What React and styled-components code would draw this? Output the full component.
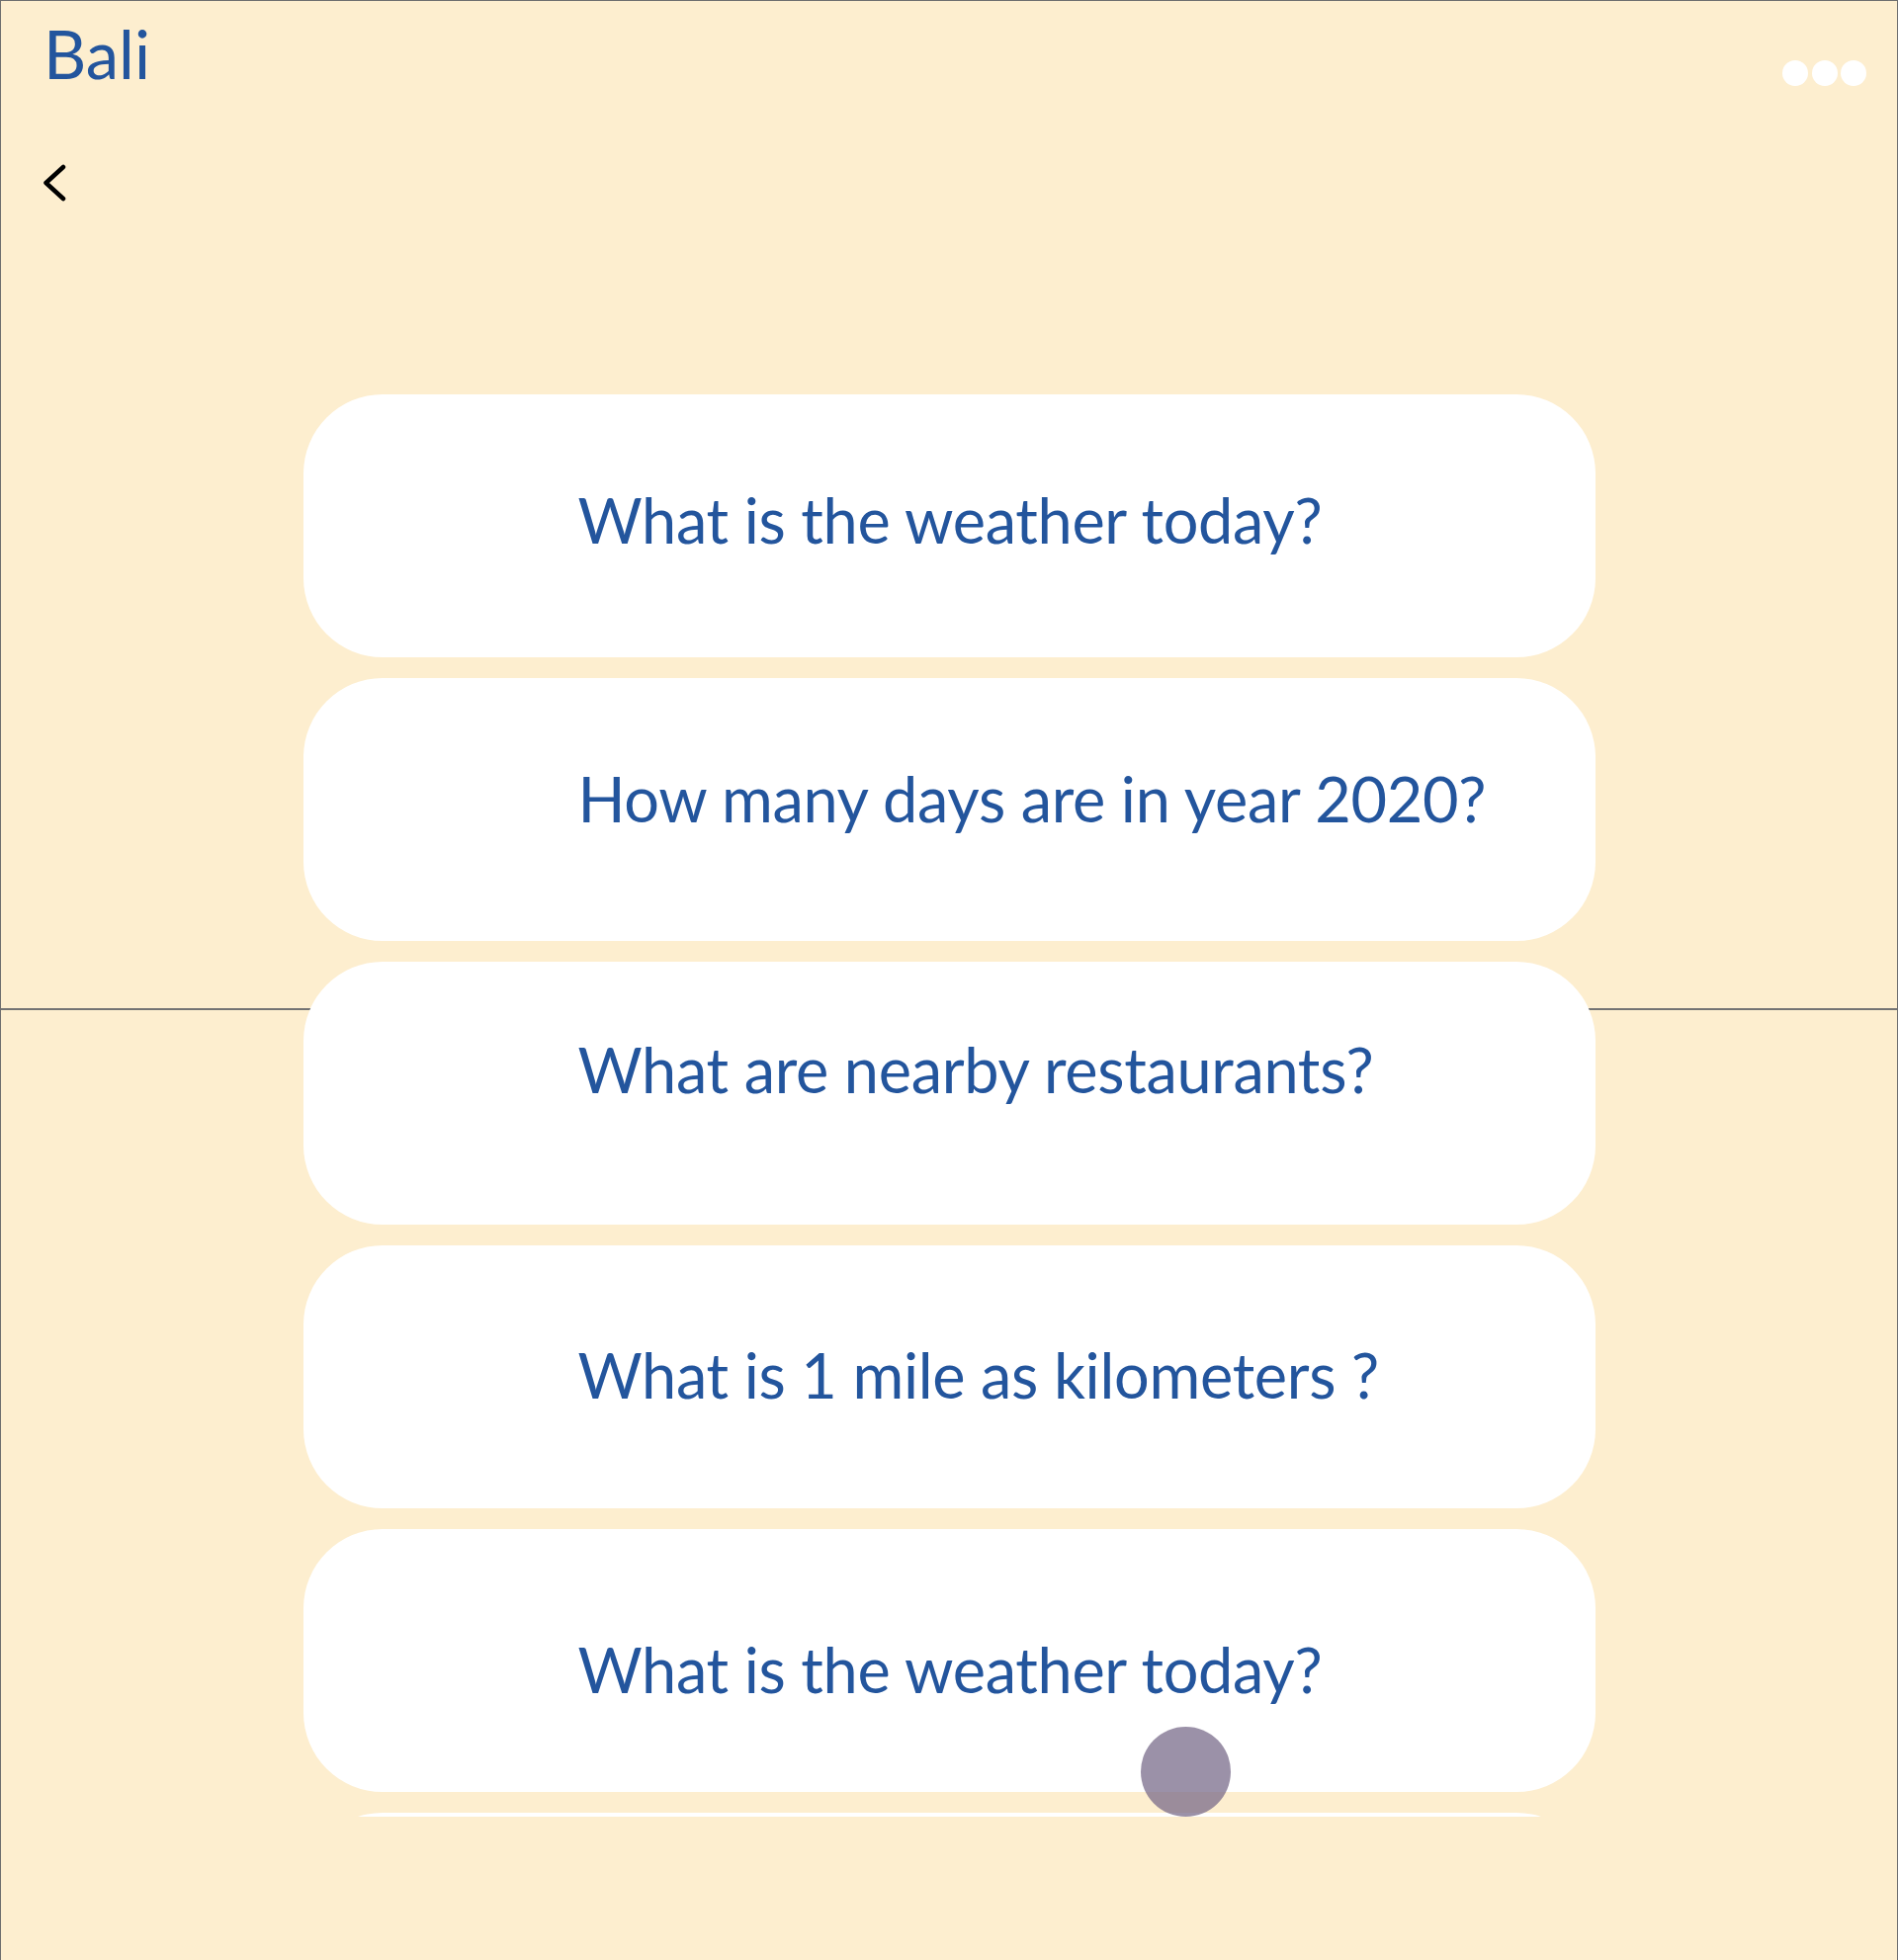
import React from 'react';
import styled, { createGlobalStyle } from 'styled-components';

const GlobalStyle = createGlobalStyle`
  html, body {
    margin: 0;
    padding: 0;
    overflow: hidden;
    background: #fdeecf;
  }
  * {
    box-sizing: border-box;
  }
`;

const Screen = styled.div`
  width: 1920px;
  height: 2000px;
  border: 1px solid #6e6e6e;
  background-color: #fdeecf;
  /* divider line drawn across the middle of the screen, cards sit over it */
  background-image: linear-gradient(
    to bottom,
    transparent 1019px,
    #737373 1019px,
    #737373 1021px,
    transparent 1021px
  );
  font-family: Lato, 'Noto Sans', sans-serif;
  display: flex;
  flex-direction: column;
`;

const TopBar = styled.div`
  display: flex;
  justify-content: space-between;
  align-items: flex-start;
  padding: 20px 31px 0 43px;
`;

const Title = styled.h1`
  margin: 0;
  font-size: 67px;
  line-height: 67px;
  font-weight: 400;
  color: #23559d;
`;

const Dots = styled.div`
  display: flex;
  gap: 3.5px;
  margin-top: 40px;
`;

const Dot = styled.span`
  width: 26px;
  height: 26px;
  border-radius: 50%;
  background: #ffffff;
`;

const BackButton = styled.button`
  display: flex;
  align-self: flex-start;
  margin: 77px 0 0 43px;
  padding: 0;
  border: 0;
  background: none;
  cursor: pointer;
`;

const List = styled.div`
  position: relative;
  margin-top: 194px;
  height: 1439px;
  overflow: hidden;
  display: flex;
  flex-direction: column;
  align-items: center;
  gap: 21px;
`;

const Card = styled.div`
  flex: none;
  width: 1307px;
  height: 266px;
  border-radius: 80px;
  background: #ffffff;
  padding: ${(p) => p.$top}px 0 0 278px;
`;

const Question = styled.p`
  margin: 0;
  font-size: 63px;
  line-height: 63px;
  font-weight: 400;
  letter-spacing: -0.3px;
  color: #23559d;
  white-space: nowrap;
`;

const Handle = styled.div`
  position: absolute;
  top: 1348px;
  left: 1153px;
  width: 91px;
  height: 91px;
  border-radius: 50%;
  background: rgba(117, 103, 135, 0.72);
`;

const questions = [
  { text: 'What is the weather today?', top: 95 },
  { text: 'How many days are in year 2020?', top: 90 },
  { text: 'What are nearby restaurants?', top: 77 },
  { text: 'What is 1 mile as kilometers ?', top: 99 },
  { text: 'What is the weather today?', top: 110 },
  // next card is only peeking in at the bottom edge
  { text: '', top: 95 },
];

const ChevronLeft = () => (
  <svg width="24" height="40" viewBox="0 0 24 40" fill="none">
    <path
      d="M20 4 L2.5 20 L20 36"
      stroke="#000"
      strokeWidth="4.5"
      strokeLinecap="round"
      strokeLinejoin="round"
    />
  </svg>
);

export default function App() {
  return (
    <>
      <GlobalStyle />
      <Screen>
        <TopBar>
          <Title>Bali</Title>
          <Dots>
            <Dot />
            <Dot />
            <Dot />
          </Dots>
        </TopBar>
        <BackButton aria-label="Back">
          <ChevronLeft />
        </BackButton>
        <List>
          {questions.map((q, i) => (
            <Card key={i} $top={q.top}>
              {q.text && <Question>{q.text}</Question>}
            </Card>
          ))}
          <Handle />
        </List>
      </Screen>
    </>
  );
}
